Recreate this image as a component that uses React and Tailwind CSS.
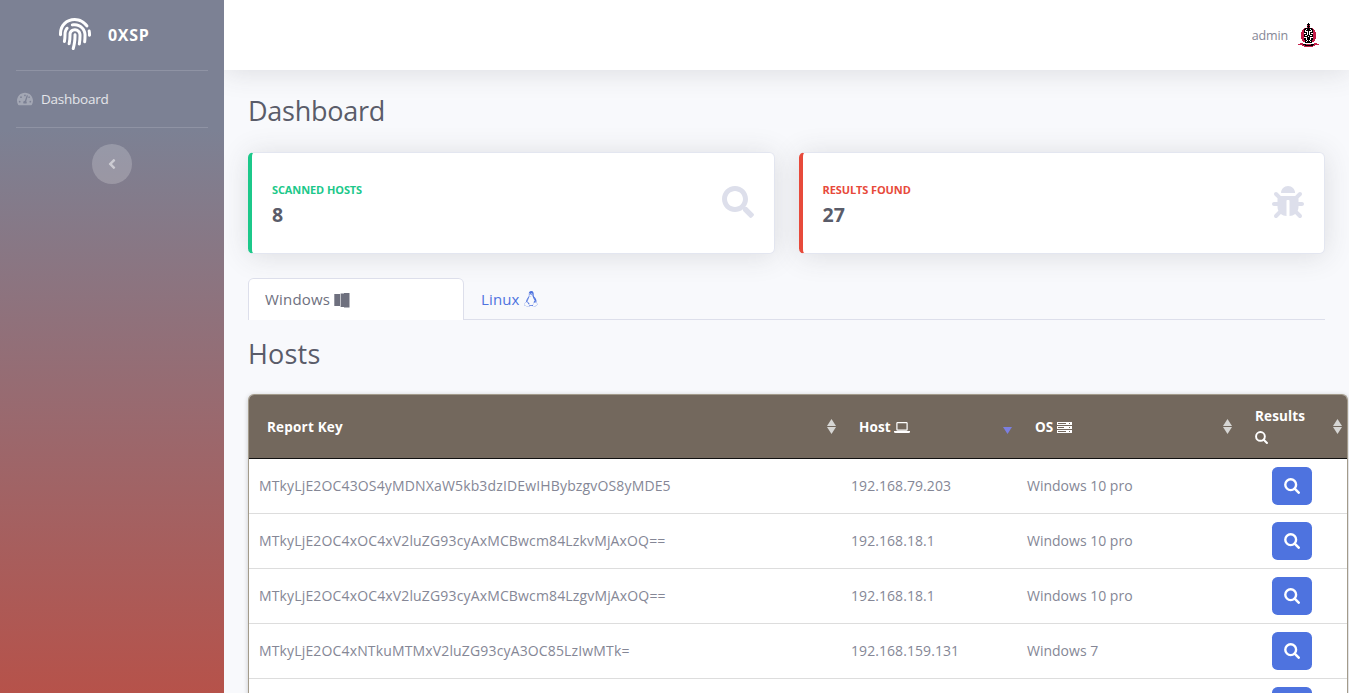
import { FaFingerprint, FaTachometerAlt, FaAngleLeft, FaSearch, FaBug, FaLinux } from "react-icons/fa";

const hosts = [
  { key: "MTkyLjE2OC43OS4yMDNXaW5kb3dzIDEwIHBybzgvOS8yMDE5", host: "192.168.79.203", os: "Windows 10 pro" },
  { key: "MTkyLjE2OC4xOC4xV2luZG93cyAxMCBwcm84LzkvMjAxOQ==", host: "192.168.18.1", os: "Windows 10 pro" },
  { key: "MTkyLjE2OC4xOC4xV2luZG93cyAxMCBwcm84LzgvMjAxOQ==", host: "192.168.18.1", os: "Windows 10 pro" },
  { key: "MTkyLjE2OC4xNTkuMTMxV2luZG93cyA3OC85LzIwMTk=", host: "192.168.159.131", os: "Windows 7" },
  { key: "", host: "", os: "" },
];

const columns = "grid grid-cols-[592px_176px_220px_110px]";

function SearchGlyph({ className }) {
  return (
    <svg viewBox="0 0 16 16" className={className} fill="none" stroke="currentColor" strokeWidth="2.4">
      <circle cx="6.7" cy="6.7" r="5.4" />
      <path d="M10.7 10.7l4 4" strokeLinecap="round" strokeWidth="2.5" />
    </svg>
  );
}

function LaptopGlyph() {
  return (
    <svg viewBox="0 0 16 11" className="h-[11px] w-4" fill="currentColor">
      <path fillRule="evenodd" d="M3.5 0h9A1.2 1.2 0 0 1 13.7 1.2V7.6A1.2 1.2 0 0 1 12.5 8.8h-9A1.2 1.2 0 0 1 2.3 7.6V1.2A1.2 1.2 0 0 1 3.5 0zM3.5 1.2v6.3h9V1.2z" />
      <path d="M0 9h16v1q0 1-1.5 1h-13Q0 11 0 10z" />
    </svg>
  );
}

function ServerGlyph() {
  return (
    <svg viewBox="0 0 15 11" className="h-[11px] w-[15px]" shapeRendering="crispEdges" fill="currentColor">
      <path fillRule="evenodd" d="M0 0h15v3H0zM1 1v1h8V1zM12 1v1h1V1zM0 4h15v3H0zM1 5v1h6V5zM12 5v1h1V5zM0 8h15v3H0zM1 9v1h8V9zM12 9v1h1V9z" />
    </svg>
  );
}

function WindowsGlyph() {
  return (
    <svg viewBox="0 0 16 16" className="h-4 w-4" fill="currentColor">
      <path d="M.3 2H6v12H.3zM6.6 1.500H10V1h5.500v14.500H10V15H6.600z" />
    </svg>
  );
}

function Avatar() {
  return (
    <svg viewBox="0 0 21 24" className="h-6 w-[21px]" shapeRendering="crispEdges">
      <path fill="#c41e4a" d="M9 1h3v4H9zM6 5h9v1H6zM5 6h11v1H5zM4 7h13v2H4zM3 9h15v7H3zM4 16h13v2H4zM5 18h11v1H5zM0 21h21v1H0zM2 20h3v1H2zM16 20h3v1h-3zM4 22h13v1H4zM6 23h9v1H6z" />
      <path fill="#000" d="M10 0h1v5h-1zM9 1h3v1H9zM9 3h3v1H9zM7 5h7v1H7zM6 6h9v3H6zM6 9h9v5H6zM6 14h9v3H6zM7 17h7v3H7zM5 21h3v1H5zM13 21h3v1h-3zM7 22h8v1H7z" />
      <path fill="#fff" d="M8 6h1v1H8zM12 6h1v1h-1zM7 7h1v2H7zM13 7h1v2h-1zM8 8h2v1H8zM11 8h2v1h-2zM9 9h1v3H9zM11 9h1v3h-1zM6 10h2v1H6zM13 10h2v1h-2zM7 12h2v1H7zM12 12h2v1h-2zM6 14h3v1H6zM12 14h3v1h-3zM10 13h1v1h-1zM8 15h1v2H8zM12 15h1v2h-1zM9 17h1v1H9zM11 17h1v1h-1zM8 18h1v1H8zM12 18h1v1h-1zM9 20h3v1H9z" />
    </svg>
  );
}

function SortArrows({ active }) {
  return (
    <svg viewBox="0 0 9 15" className="h-[15px] w-[9px] shrink-0">
      {!active && <path d="M4.5 0L9 7H0z" fill="#d6d6d4" />}
      <path d="M0 8h9l-4.5 7z" fill={active ? "#7b7fe0" : "#d6d6d4"} />
    </svg>
  );
}

function HeadCell({ children, active }) {
  return (
    <div className="flex items-center justify-between pl-[18px] pr-[5px] text-[13.5px] font-bold text-white">
      {children}
      <SortArrows active={active} />
    </div>
  );
}

function StatCard({ label, value, bar, color, Icon }) {
  return (
    <div className={"flex h-[102px] items-center justify-between rounded-[5.6px] border border-l-4 border-[#e3e6f0] bg-white pr-5 pl-5 shadow-[0_2px_28px_0_rgba(58,59,69,0.15)] " + bar}>
      <div>
        <div className={"text-[11px] leading-[17px] font-bold tracking-[-0.1px] " + color}>{label}</div>
        <div className="mt-1 translate-y-px text-[19.5px] leading-6 font-bold text-[#5a5c69]">{value}</div>
      </div>
      <Icon className="size-8 -translate-y-px text-[#dddfeb]" />
    </div>
  );
}

export default function App() {
  return (
    <div className="flex h-[693px] w-[1349px] overflow-hidden bg-[#f8f9fc] font-['Open_Sans','Noto_Sans',sans-serif] text-[#858796]">
      <aside className="z-10 flex w-56 shrink-0 flex-col items-center bg-[linear-gradient(180deg,#7c8194_18.7%,#b6524a_100%)] px-4">
        <div className="flex h-[70px] w-full items-center pl-[43px] text-white">
          <FaFingerprint className="size-8 -translate-y-px" />
          <span className="ml-[17px] text-[16px] font-bold tracking-[0.7px]">0XSP</span>
        </div>
        <hr className="w-full border-t border-white/15" />
        <div className="flex h-14 w-full items-center text-[13.5px] text-white/80">
          <FaTachometerAlt className="ml-px size-4 text-white/30" />
          <span className="ml-2 tracking-[-0.25px]">Dashboard</span>
        </div>
        <hr className="w-full border-t border-white/15" />
        <button className="mt-4 flex size-10 items-center justify-center rounded-full bg-white/20 pr-px">
          <FaAngleLeft className="size-4 text-white/50" />
        </button>
      </aside>

      <div className="flex w-[1125px] shrink-0 flex-col">
        <header className="flex h-[70px] shrink-0 items-center justify-end bg-white pr-[30px] shadow-[0_2px_28px_0_rgba(58,59,69,0.15)]">
          <span className="mr-2.5 translate-y-px text-[12.5px] tracking-[-0.15px]">admin</span>
          <Avatar />
        </header>

        <main className="flex w-[1125px] flex-col pl-6">
          <h1 className="mt-6 h-[34px] text-[27px] leading-[34px] tracking-[-0.25px] text-[#5a5c69]">Dashboard</h1>
          <div className="mt-6 grid w-[1077px] grid-cols-2 gap-6">
            <StatCard label="SCANNED HOSTS" value="8" bar="border-l-[#1cc88a]" color="text-[#1cc88a]" Icon={FaSearch} />
            <StatCard label="RESULTS FOUND" value="27" bar="border-l-[#e74a3b]" color="text-[#e74a3b]" Icon={FaBug} />
          </div>

          <nav className="mt-6 flex h-[42px] w-[1077px] text-[15px]">
            <a className="flex w-[216px] items-center gap-1 rounded-t-[5.6px] border border-b-0 border-[#dddfeb] bg-white pl-4 text-[#6e707e]">
              <span className="tracking-[0.2px]">Windows</span>
              <WindowsGlyph />
            </a>
            <a className="flex flex-1 items-center gap-[3px] border-b border-[#dddfeb] pt-px pl-[17px] text-[#4e73df]">
              <span className="tracking-[0.15px]">Linux</span>
              <FaLinux className="size-4" />
            </a>
          </nav>

          <h2 className="mt-[17px] h-[34px] text-[27px] leading-[34px] tracking-[0.2px] text-[#5a5c69]">Hosts</h2>

          <section className="mt-[23px] w-[1100px] rounded-t-[6px] border border-b-0 border-[#a39b8b] bg-white text-[14px] shadow-[0_1px_5px_rgba(0,0,0,0.2)]">
            <div className={columns + " h-16 rounded-t-[5px] border-b border-[#111111] bg-[#73685d]"}>
              <HeadCell><span className="translate-y-px tracking-[0.2px]">Report Key</span></HeadCell>
              <HeadCell active><span className="flex translate-y-px items-center gap-[3px] tracking-[0.15px]">Host<LaptopGlyph /></span></HeadCell>
              <HeadCell><span className="flex translate-y-px items-center gap-1">OS<ServerGlyph /></span></HeadCell>
              <HeadCell>
                <span className="flex flex-col leading-[21px] tracking-[0.15px]">
                  Results
                  <span className="flex h-[21px] items-center"><SearchGlyph className="size-[13px]" /></span>
                </span>
              </HeadCell>
            </div>
            {hosts.map((h, i) => (
              <div key={i} className={columns + " h-[55px] items-center border-b border-[#dddddd]"}>
                <span className="-translate-y-px pl-2.5 tracking-[0.15px]">{h.key}</span>
                <span className="-translate-y-px pl-2.5 tracking-[0.07px]">{h.host}</span>
                <span className="-translate-y-px pl-2.5">{h.os}</span>
                <span className="flex justify-center">
                  <button className="flex h-[38px] w-10 items-center justify-center rounded-[5.6px] bg-[#4e73df] text-white">
                    <SearchGlyph className="size-4" />
                  </button>
                </span>
              </div>
            ))}
          </section>
        </main>
      </div>
    </div>
  );
}
